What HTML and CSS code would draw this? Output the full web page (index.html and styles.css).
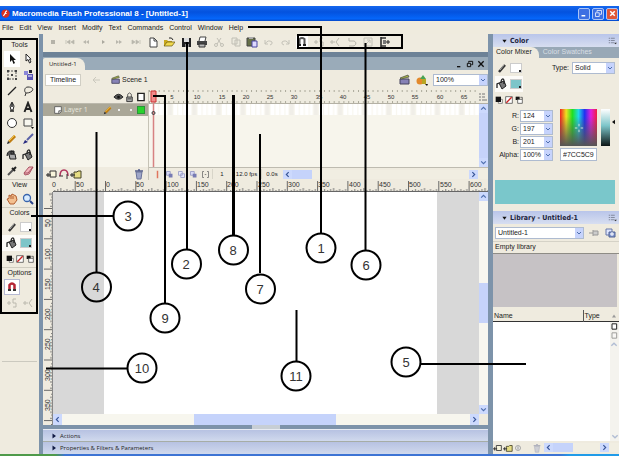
FILE: index.html
```html
<!DOCTYPE html>
<html lang="en">
<head>
<meta charset="utf-8">
<title>Macromedia Flash Professional 8 - [Untitled-1]</title>
<link rel="stylesheet" href="styles.css">
</head>
<body>
<svg class="sprite" aria-hidden="true">
  <symbol id="arrow" viewBox="0 0 12 12"><path d="M4 1v8l2-2 1.500 4 1.500-1-1.500-3H10z" fill="#111"/></symbol>
  <symbol id="subarrow" viewBox="0 0 12 12"><path d="M4 1v7l2-1.500L7.500 10l1.500-1-1.500-2.800H9z" fill="#fff" stroke="#222"/></symbol>
  <symbol id="transform" viewBox="0 0 12 12"><path d="M2 2h8v8H2z" fill="none" stroke="#555" stroke-dasharray="2 1"/><path d="M1 1h2v2H1zM9 1h2v2H9zM1 9h2v2H1zM9 9h2v2H9zM5 5h2v2H5z" fill="#444"/></symbol>
  <symbol id="gradient" viewBox="0 0 12 12"><path d="M5 5h6v6H5z" fill="#5954b8"/><path d="M2 2h4v4H2z" fill="#8a86d8"/><path d="M7 1h3v3H7z" fill="#223"/><path d="M6 7h4" stroke="#fff"/></symbol>
  <symbol id="line" viewBox="0 0 12 12"><path d="M2 10L10 2" stroke="#222" stroke-width="1.200"/></symbol>
  <symbol id="lasso" viewBox="0 0 12 12"><path d="M3 11l1-3C2 7 2 2 6 2s6 2 4 4-5 2-6 2" fill="none" stroke="#333"/></symbol>
  <symbol id="pen" viewBox="0 0 12 12"><path d="M6 1l2 4-1 4H5L4 5z" fill="#fff" stroke="#222"/><path d="M4 10h4M6 2v4" stroke="#222" stroke-width="1.500"/></symbol>
  <symbol id="type" viewBox="0 0 12 12"><path d="M2.500 11L6 2l3.500 9M4 8h4" fill="none" stroke="#222" stroke-width="2"/></symbol>
  <symbol id="oval" viewBox="0 0 12 12"><circle cx="6" cy="6" r="4.500" fill="#fff" stroke="#333"/></symbol>
  <symbol id="rect" viewBox="0 0 12 12"><path d="M2 2h8v7H2z" fill="#f8f7f0" stroke="#444"/><path d="M9 10h3l-1.500 2z" fill="#111"/></symbol>
  <symbol id="pencil" viewBox="0 0 12 12"><path d="M3 9l6-6" stroke="#c07d12" stroke-width="3"/><path d="M3 8l6-6" stroke="#f4c440"/><path d="M1 11l1-3 2 2z" fill="#222"/></symbol>
  <symbol id="brush" viewBox="0 0 12 12"><path d="M5 7l6-6" stroke="#5a62a8" stroke-width="2"/><path d="M1 11l2-4 3 2z" fill="#272a80"/></symbol>
  <symbol id="ink" viewBox="0 0 12 12"><path d="M3 5h6l1 5H4z" fill="#aaa" stroke="#222"/><path d="M1 7c0-6 5-6 7-3M5 2h3v3H5z" fill="#555" stroke="#222"/></symbol>
  <symbol id="bucket" viewBox="0 0 12 12"><path d="M3 5l5-2 2 5-4 3z" fill="#777" stroke="#222"/><path d="M5 5C5 0 8 0 8 3v3M1 10V6l2-1" fill="none" stroke="#222" stroke-width="1.300"/></symbol>
  <symbol id="dropper" viewBox="0 0 12 12"><path d="M2 10l5-5" stroke="#555" stroke-width="2"/><path d="M6 3l3 3M7 5l3-3" stroke="#222" stroke-width="2"/></symbol>
  <symbol id="eraser" viewBox="0 0 12 12"><path d="M2 8l5-6h4L7 9l-4 1z" fill="#f3b6bd" stroke="#a85462"/><path d="M2 8h4l5-6" fill="none" stroke="#a85462"/></symbol>
  <symbol id="hand" viewBox="0 0 12 12"><path d="M4 11L1 6l2-.5V2l2 1 1-2 2 1 2 1 1 4-3 4z" fill="#f3c090" stroke="#b25e2e"/><path d="M5 3v3M7 3v3" stroke="#b25e2e"/></symbol>
  <symbol id="zoomer" viewBox="0 0 12 12"><circle cx="5" cy="5" r="3.500" fill="#d7ebff" stroke="#3864ac" stroke-width="1.300"/><path d="M8 8l3 3" stroke="#2c448c" stroke-width="2"/></symbol>
  <symbol id="stroke" viewBox="0 0 12 12"><path d="M3 10l6-7" stroke="#333" stroke-width="2.500"/><path d="M4 8l4-5" stroke="#aaa"/></symbol>
  <symbol id="bw" viewBox="0 0 12 12"><path d="M5 5h6v6H5z" fill="#fff" stroke="#555"/><path d="M1 1h8v8H1z" fill="#111"/></symbol>
  <symbol id="nocolor" viewBox="0 0 12 12"><path d="M1 1h10v10H1z" fill="#fff" stroke="#333"/><path d="M2 10l8-8" stroke="#c22" stroke-width="2"/></symbol>
  <symbol id="swap" viewBox="0 0 12 12"><path d="M1 1h6v5H1z" fill="#111"/><path d="M4 5h7v6H4z" fill="#fff" stroke="#333"/><path d="M8 2h3v3" fill="none" stroke="#333"/></symbol>
  <symbol id="magnet" viewBox="0 0 12 12"><path d="M3.500 9V4q2.500-3 5 0v5" fill="none" stroke="#b52534" stroke-width="2.500"/><path d="M2 8h3v2H2zM7 8h3v2H7z" fill="#333"/></symbol>
  <symbol id="magnetgray" viewBox="0 0 12 12"><path d="M3.500 10V3q2.500-2 5 0v7" fill="none" stroke="#555" stroke-width="2"/><path d="M2 8h3v2H2zM7 8h3v2H7z" fill="#222"/></symbol>
  <symbol id="smooth" viewBox="0 0 12 12"><path d="M1 6h4M3 4v4M10 2H7v4h3v4H7" fill="none" stroke="#bbb9ae"/></symbol>
  <symbol id="straight" viewBox="0 0 12 12"><path d="M1 6h5M3 4v4M10 2L7 6l3 4" fill="none" stroke="#bbb9ae"/></symbol>
  <symbol id="stop" viewBox="0 0 12 12"><path d="M4 4h4v4H4z" fill="#b5b3a9"/></symbol>
  <symbol id="first" viewBox="0 0 12 12"><path d="M2 4v4M6 4L3 6l3 2zM10 4L7 6l3 2z" fill="#b9b7ad" stroke="#b9b7ad" stroke-width=".7"/></symbol>
  <symbol id="back" viewBox="0 0 12 12"><path d="M6 4L3 6l3 2zM9 4L6 6l3 2z" fill="#b9b7ad"/></symbol>
  <symbol id="play" viewBox="0 0 12 12"><path d="M5 4l3 2-3 2z" fill="#aaa89e"/></symbol>
  <symbol id="fwd" viewBox="0 0 12 12"><path d="M3 4l3 2-3 2zM6 4l3 2-3 2z" fill="#b9b7ad"/></symbol>
  <symbol id="last" viewBox="0 0 12 12"><path d="M2 4l3 2-3 2zM6 4l3 2-3 2zM10 4v4" fill="#b9b7ad" stroke="#b9b7ad" stroke-width=".7"/></symbol>
  <symbol id="new" viewBox="0 0 12 12"><path d="M3 2h4l3 3v6H3z" fill="#fff" stroke="#444"/><path d="M7 2v3h3" fill="none" stroke="#444"/></symbol>
  <symbol id="open" viewBox="0 0 12 12"><path d="M1 10V4h3l1 1h4v5z" fill="#c9a81d"/><path d="M1 10l3-4h8l-3 4z" fill="#f1d94d" stroke="#665615" stroke-width=".7"/><path d="M6 2q3-1 4 2" fill="none" stroke="#222"/></symbol>
  <symbol id="save" viewBox="0 0 12 12"><path d="M2 2h9v9H2z" fill="#222"/><path d="M4 2h5v4H4z" fill="#ddd"/><path d="M5 8h4v3H5z" fill="#888"/></symbol>
  <symbol id="print" viewBox="0 0 12 12"><path d="M3 5l1-4h6L9 5" fill="#fff" stroke="#444"/><path d="M1 5h10v4H1z" fill="#444"/><path d="M3 8h6v3H3z" fill="#bbb" stroke="#333"/></symbol>
  <symbol id="cut" viewBox="0 0 12 12"><path d="M4 2l4 6M8 2L4 8" stroke="#c2c0b6"/><circle cx="3" cy="9" r="1.500" fill="none" stroke="#c2c0b6"/><circle cx="9" cy="9" r="1.500" fill="none" stroke="#c2c0b6"/></symbol>
  <symbol id="copy" viewBox="0 0 12 12"><path d="M2 2h5v6H2zM5 4h5v6H5z" fill="#eceade" stroke="#c0beb4"/></symbol>
  <symbol id="paste" viewBox="0 0 12 12"><path d="M1 2h8v8H1z" fill="#667048" stroke="#444"/><path d="M3 1h4v2H3z" fill="#aaa"/><path d="M6 5h5v6H6z" fill="#ded9ff" stroke="#4b46a0"/></symbol>
  <symbol id="undo" viewBox="0 0 12 12"><path d="M2 4v4h3M2 8q3-5 7-2 1 2-2 3" fill="none" stroke="#c4c2b8"/></symbol>
  <symbol id="redo" viewBox="0 0 12 12"><path d="M10 4v4H7M10 8Q7 3 3 6q-1 2 2 3" fill="none" stroke="#c4c2b8"/></symbol>
  <symbol id="rotate" viewBox="0 0 12 12"><path d="M3 2v3h5c3 1 2 5-1 5H3" fill="none" stroke="#b5b3a9"/></symbol>
  <symbol id="scale" viewBox="0 0 12 12"><path d="M2 2h8v8H2zM4 8l4-4M5 4h3v3" fill="none" stroke="#c4c2b8"/></symbol>
  <symbol id="align" viewBox="0 0 12 12"><path d="M2 1v10" stroke="#222" stroke-width="1.500"/><path d="M2 2h5M2 10h5" stroke="#333" stroke-width="1.500"/><path d="M4 4h3v4H4z" fill="#777"/><path d="M7 6h4M9 4v4" stroke="#222"/></symbol>
  <symbol id="clap" viewBox="0 0 12 12"><path d="M1 5h9v5H1z" fill="#8782b6" stroke="#44425c"/><path d="M1 4l8-3 1 2-8 2z" fill="#a9b746" stroke="#444" stroke-width=".7"/></symbol>
  <symbol id="symbols" viewBox="0 0 12 12"><circle cx="4" cy="7" r="3.500" fill="#e3892b"/><path d="M4 5l3-4 3 4z" fill="#47a352"/><path d="M6 5h4v5H6z" fill="#b8a624"/><path d="M9 10h3l-1 2z" fill="#111"/></symbol>
  <symbol id="eye" viewBox="0 0 12 12"><path d="M1 6q5-6 10 0-5 5-10 0z" fill="#555" stroke="#222"/><circle cx="6" cy="6" r="1.500" fill="#111"/></symbol>
  <symbol id="lock" viewBox="0 0 12 12"><path d="M4 6V3q2-3 4 0v3" fill="none" stroke="#555"/><path d="M3 6h6v5H3z" fill="#aaa" stroke="#333"/><path d="M4 8h4" stroke="#444"/></symbol>
  <symbol id="box" viewBox="0 0 12 12"><path d="M3 2h7v8H3z" fill="#fff" stroke="#222" stroke-width="1.500"/></symbol>
  <symbol id="layer" viewBox="0 0 12 12"><path d="M2 2h8v6L8 10H2z" fill="#fff" stroke="#555"/><path d="M7 10V7h3" fill="#ddd" stroke="#444"/></symbol>
  <symbol id="addlayer" viewBox="0 0 12 12"><path d="M4 3h6v6H4z" fill="#f8f5dc" stroke="#333"/><path d="M0 7h5M2 5v4" stroke="#222"/></symbol>
  <symbol id="guide" viewBox="0 0 12 12"><path d="M2 8q0-6 4-6t4 6" fill="none" stroke="#b0345d" stroke-width="1.500"/><path d="M1 8h4M9 6v5" stroke="#333"/></symbol>
  <symbol id="folder" viewBox="0 0 12 12"><path d="M4 4h3l1-1h3v7H4z" fill="#e6dd84" stroke="#444228"/><path d="M0 7h5M2 5v4" stroke="#222"/></symbol>
  <symbol id="trash" viewBox="0 0 12 12"><path d="M3 4h6l-1 7H4z" fill="#9fa6c8" stroke="#69729a"/><path d="M2 3h8M5 2h2" stroke="#555f8c" stroke-width="1.500"/></symbol>
  <symbol id="onion" viewBox="0 0 12 12"><path d="M2 2h5v5H2z" fill="#d7d8f4" stroke="#8e91bf"/><path d="M5 5h5v5H5z" fill="#777bb3"/></symbol>
  <symbol id="onionout" viewBox="0 0 12 12"><path d="M2 2h5v5H2zM5 5h5v5H5z" fill="#e7e8fa" stroke="#9295c2"/></symbol>
  <symbol id="bracket" viewBox="0 0 12 12"><path d="M4 2H2v8h2M8 2h2v8H8M5 6h2" fill="none" stroke="#666"/></symbol>
  <symbol id="menu" viewBox="0 0 12 12"><path d="M1 3h2M1 6h2M1 9h2M4 3h5M4 6h5M4 9h4" stroke="#6d7486"/><path d="M8 9h4l-2 2z" fill="#333"/></symbol>
  <symbol id="pin" viewBox="0 0 12 12"><path d="M1 6h4M5 3v6M5 4h5v4H5" fill="#ccc" stroke="#999"/></symbol>
  <symbol id="newlib" viewBox="0 0 12 12"><path d="M2 2h6v6H2z" fill="#dfe6ff" stroke="#6777a8"/><path d="M5 5h6v5H5z" fill="#8297d2" stroke="#516293"/><path d="M6 7h4M8 5v4" stroke="#fff"/></symbol>
  <symbol id="props" viewBox="0 0 12 12"><circle cx="6" cy="6" r="3" fill="#eee" stroke="#999"/><path d="M6 4v4" stroke="#888"/></symbol>
  <symbol id="left" viewBox="0 0 12 12"><path d="M8 2L4 6l4 4" fill="none" stroke="#365497" stroke-width="2"/></symbol>
  <symbol id="right" viewBox="0 0 12 12"><path d="M4 2l4 4-4 4" fill="none" stroke="#365497" stroke-width="2"/></symbol>
  <symbol id="up" viewBox="0 0 12 12"><path d="M2 8l4-4 4 4" fill="none" stroke="#4f6fae" stroke-width="2"/></symbol>
  <symbol id="down" viewBox="0 0 12 12"><path d="M2 4l4 4 4-4" fill="none" stroke="#4f6fae" stroke-width="2"/></symbol>
  <symbol id="tri" viewBox="0 0 12 12"><path d="M1 3h10L6 10z" fill="#111"/></symbol>
  <symbol id="triright" viewBox="0 0 12 12"><path d="M3 1v10l7-5z" fill="#111a44"/></symbol>
  <symbol id="flash" viewBox="0 0 12 12"><circle cx="6" cy="6" r="5.500" fill="#d9321f"/><path d="M8 2.500Q6 3 5.500 5.500T3 9M5 6h2.500" fill="none" stroke="#fff" stroke-width="1.500"/></symbol>
</svg>

<div class="app">
  <header class="titlebar">
    <svg><use href="#flash"/></svg>
    <h1>Macromedia Flash Professional 8 - [Untitled-1]</h1>
    <div class="winbuttons">
      <button aria-label="Minimize"><svg viewBox="0 0 12 12"><path d="M2 9h5" stroke="#fff" stroke-width="2"/></svg></button>
      <button aria-label="Restore"><svg viewBox="0 0 12 12"><path d="M4 4V2h6v5H8M2 5h5v5H2z" fill="none" stroke="#fff"/></svg></button>
      <button class="close" aria-label="Close"><svg viewBox="0 0 12 12"><path d="M3 3l6 6M9 3l-6 6" stroke="#fff" stroke-width="2"/></svg></button>
    </div>
  </header>
  <nav class="menubar">
    <a href="#">File</a><a href="#">Edit</a><a href="#">View</a><a href="#">Insert</a><a href="#">Modify</a><a href="#">Text</a><a href="#">Commands</a><a href="#">Control</a><a href="#">Window</a><a href="#">Help</a>
  </nav>

  <div class="work">
    <aside class="tools">
      <h2>Tools</h2>
      <div class="toolgrid">
        <button class="on" aria-label="Selection"><svg><use href="#arrow"/></svg></button><button aria-label="Subselection"><svg><use href="#subarrow"/></svg></button>
        <button aria-label="Free transform"><svg><use href="#transform"/></svg></button><button aria-label="Gradient transform"><svg><use href="#gradient"/></svg></button>
        <button aria-label="Line"><svg><use href="#line"/></svg></button><button aria-label="Lasso"><svg><use href="#lasso"/></svg></button>
        <button aria-label="Pen"><svg><use href="#pen"/></svg></button><button aria-label="Text"><svg><use href="#type"/></svg></button>
        <button aria-label="Oval"><svg><use href="#oval"/></svg></button><button aria-label="Rectangle"><svg><use href="#rect"/></svg></button>
        <button aria-label="Pencil"><svg><use href="#pencil"/></svg></button><button aria-label="Brush"><svg><use href="#brush"/></svg></button>
        <button aria-label="Ink bottle"><svg><use href="#ink"/></svg></button><button aria-label="Paint bucket"><svg><use href="#bucket"/></svg></button>
        <button aria-label="Eyedropper"><svg><use href="#dropper"/></svg></button><button aria-label="Eraser"><svg><use href="#eraser"/></svg></button>
      </div>
      <h2 class="ruled">View</h2>
      <div class="toolgrid">
        <button aria-label="Hand"><svg><use href="#hand"/></svg></button><button aria-label="Zoom"><svg><use href="#zoomer"/></svg></button>
      </div>
      <h2 class="ruled">Colors</h2>
      <div class="swatchrow"><svg><use href="#stroke"/></svg><button class="swatch white" aria-label="Stroke color"></button></div>
      <div class="swatchrow on"><svg><use href="#bucket"/></svg><button class="swatch teal" aria-label="Fill color"></button></div>
      <div class="minirow">
        <button aria-label="Black and white"><svg><use href="#bw"/></svg></button><button aria-label="No color"><svg><use href="#nocolor"/></svg></button><button aria-label="Swap colors"><svg><use href="#swap"/></svg></button>
      </div>
      <h2 class="ruled">Options</h2>
      <div class="toolgrid">
        <button class="on framed" aria-label="Snap"><svg><use href="#magnet"/></svg></button><span></span>
        <button aria-label="Smooth"><svg><use href="#smooth"/></svg></button><button aria-label="Straighten"><svg><use href="#straight"/></svg></button>
      </div>
      <div class="toolsend"></div>
    </aside>

    <main class="doc">
      <div class="maintoolbar">
        <div class="icons">
          <button aria-label="Stop"><svg><use href="#stop"/></svg></button><button aria-label="First"><svg><use href="#first"/></svg></button><button aria-label="Step back"><svg><use href="#back"/></svg></button><button aria-label="Play"><svg><use href="#play"/></svg></button><button aria-label="Step forward"><svg><use href="#fwd"/></svg></button><button aria-label="Last"><svg><use href="#last"/></svg></button>
          <button aria-label="New"><svg><use href="#new"/></svg></button><button aria-label="Open"><svg><use href="#open"/></svg></button><button aria-label="Save"><svg><use href="#save"/></svg></button><button aria-label="Print"><svg><use href="#print"/></svg></button><button aria-label="Cut"><svg><use href="#cut"/></svg></button><button aria-label="Copy"><svg><use href="#copy"/></svg></button><button aria-label="Paste"><svg><use href="#paste"/></svg></button><button aria-label="Undo"><svg><use href="#undo"/></svg></button><button aria-label="Redo"><svg><use href="#redo"/></svg></button>
          <button class="on" aria-label="Snap to objects"><svg><use href="#magnetgray"/></svg></button><button aria-label="Smooth"><svg><use href="#smooth"/></svg></button><button aria-label="Straighten"><svg><use href="#straight"/></svg></button><button aria-label="Rotate"><svg><use href="#rotate"/></svg></button><button aria-label="Scale"><svg><use href="#scale"/></svg></button><button aria-label="Align"><svg><use href="#align"/></svg></button>
        </div>
      </div>
      <div class="tabbar">
        <a class="tab" href="#">Untitled-1</a>
        <div class="docbuttons">
          <button aria-label="Minimize document"><svg viewBox="0 0 12 12"><path d="M3 10h5" stroke="#111" stroke-width="2"/></svg></button>
          <button aria-label="Restore document"><svg viewBox="0 0 12 12"><path d="M4 4V2h6v5H8M2 5h5v5H2z" fill="none" stroke="#111" stroke-width="1.500"/></svg></button>
          <button aria-label="Close document"><svg viewBox="0 0 12 12"><path d="M2 2l8 8M10 2l-8 8" stroke="#111" stroke-width="2"/></svg></button>
        </div>
      </div>
      <div class="editbar">
        <button class="timelinebtn">Timeline</button>
        <svg class="faint" viewBox="0 0 12 12"><path d="M10 6H3M6 3L3 6l3 3" fill="none" stroke="#cac8bd"/></svg>
        <span class="scene"><svg><use href="#clap"/></svg>Scene 1</span>
        <div class="editright">
          <button aria-label="Edit scene"><svg><use href="#clap"/></svg></button>
          <button aria-label="Edit symbols"><svg><use href="#symbols"/></svg></button>
          <span class="combo"><select aria-label="Zoom"><option>100%</option></select><svg><use href="#down"/></svg></span>
        </div>
      </div>

      <section class="timeline">
        <div class="layers">
          <div class="layerhead"><svg><use href="#eye"/></svg><svg><use href="#lock"/></svg><svg><use href="#box"/></svg></div>
          <div class="layer"><svg><use href="#layer"/></svg><span>Layer 1</span><svg><use href="#pencil"/></svg><i class="dot"></i><i class="dot"></i><i class="green"></i></div>
          <div class="layerfoot"><svg><use href="#addlayer"/></svg><svg><use href="#guide"/></svg><svg><use href="#folder"/></svg><svg class="end"><use href="#trash"/></svg></div>
        </div>
        <div class="frames">
          <svg class="framesvg">
            <defs>
              <pattern id="ft" width="4.860" height="77" patternUnits="userSpaceOnUse"><path d="M.5 0v2M.5 11v2" stroke="#aaa899"/></pattern>
              <pattern id="fc" width="24.300" height="26" patternUnits="userSpaceOnUse"><path d="M0 14h4v11H0zM5 14h4v11H5zM10 14h4v11h-4zM15 14h3v11h-3z" fill="#fff"/><path d="M19 14h4v11h-4z" fill="#f0eee8"/></pattern>
            </defs>
            <rect width="100%" height="77" fill="#f7f5ec"/>
            <rect width="100%" height="13" fill="#eeebdf"/>
            <rect width="100%" height="13" fill="url(#ft)"/>
            <rect y="13" width="100%" height="1" fill="#b4b1a5"/>
            <rect y="14" width="100%" height="12" fill="url(#fc)"/>
            <path d="M2 1h5v11H2z" fill="#f08a8a" stroke="#c33"/>
            <path d="M4.500 12v65" stroke="#d78282" stroke-width="1.500"/>
            <circle cx="4.500" cy="23" r="1.500" fill="none" stroke="#333"/>
            <g class="nums"><text x="23" y="9">5</text><text x="48" y="9">10</text><text x="73" y="9">15</text><text x="97" y="9">20</text><text x="121" y="9">25</text><text x="145" y="9">30</text><text x="170" y="9">35</text><text x="194" y="9">40</text><text x="218" y="9">45</text><text x="242" y="9">50</text><text x="266" y="9">55</text><text x="291" y="9">60</text><text x="315" y="9">65</text></g>
            <path d="M328 0h11v13h-11z" fill="#eeebdf"/><path d="M330 4h2M330 7h2M330 10h2M333 4h3M333 7h3M333 10h5" stroke="#777"/>
          </svg>
          <div class="vscroll short"><svg><use href="#up"/></svg><i></i><svg><use href="#down"/></svg></div>
          <div class="framefoot">
            <svg viewBox="0 0 12 12"><path d="M6 1v10" stroke="#e0765e" stroke-width="2"/></svg><svg><use href="#onion"/></svg><svg><use href="#onionout"/></svg><svg><use href="#onion"/></svg><svg><use href="#bracket"/></svg>
            <span class="num">1</span><span class="fps">12.0 fps</span><span class="sec">0.0s</span>
            <div class="hscroll"><svg><use href="#left"/></svg><i></i><svg class="end"><use href="#right"/></svg></div>
          </div>
        </div>
      </section>

      <div class="hruler">
        <svg>
          <defs><pattern id="ht" x="62" width="30.300" height="12" patternUnits="userSpaceOnUse"><path d="M.5 1v11" stroke="#666"/><path d="M4.500 10v2M7.500 9v3M10.500 10v2M13.500 9v3M16.500 8v4M19.500 10v2M22.500 9v3M25.500 10v2M28.500 9v3" stroke="#777"/></pattern></defs>
          <rect x="10" width="100%" height="12" fill="url(#ht)"/><rect x="10" y="11" width="100%" height="1" fill="#666"/>
          <g class="rnum"><text x="9" y="7">0</text><text x="33" y="7">50</text><text x="63" y="7">0</text><text x="93" y="7">50</text><text x="124" y="7">100</text><text x="154" y="7">150</text><text x="184" y="7">200</text><text x="215" y="7">250</text><text x="245" y="7">300</text><text x="275" y="7">350</text><text x="306" y="7">400</text><text x="336" y="7">450</text><text x="366" y="7">500</text><text x="397" y="7">550</text><text x="427" y="7">600</text></g>
        </svg>
      </div>
      <div class="stagearea">
        <div class="vruler">
          <svg>
            <defs><pattern id="vt" y="16" width="10" height="30.300" patternUnits="userSpaceOnUse"><path d="M1 .5h9" stroke="#666"/><path d="M8 4.500h2M7 7.500h3M8 10.500h2M7 13.500h3M6 16.500h4M8 19.500h2M7 22.500h3M8 25.500h2M7 28.500h3" stroke="#777"/></pattern></defs>
            <path d="M0 0h10v233H0z" fill="url(#vt)"/><path d="M9.500 0v233" stroke="#888"/>
            <g class="rnum"><text transform="translate(7 35) rotate(-90)">50</text><text transform="translate(7 68) rotate(-90)">100</text><text transform="translate(7 98) rotate(-90)">150</text><text transform="translate(7 128) rotate(-90)">200</text><text transform="translate(7 158) rotate(-90)">250</text><text transform="translate(7 189) rotate(-90)">300</text><text transform="translate(7 219) rotate(-90)">350</text></g>
          </svg>
        </div>
        <div class="canvas"><div class="stage"></div></div>
        <div class="vscroll tall"><svg><use href="#up"/></svg><i></i><svg><use href="#down"/></svg></div>
        <div class="hscroll big"><svg><use href="#left"/></svg><i></i><svg class="end"><use href="#right"/></svg></div>
      </div>
      <div class="splitter"><i></i></div>
      <button class="docked"><svg><use href="#triright"/></svg>Actions</button>
      <button class="docked"><svg><use href="#triright"/></svg>Properties &amp; Filters &amp; Parameters</button>
    </main>

    <aside class="panels">
      <h2 class="panelhead"><svg class="tiny"><use href="#tri"/></svg>Color<svg class="end"><use href="#menu"/></svg></h2>
      <div class="ptabs"><a class="active" href="#">Color Mixer</a><a href="#">Color Swatches</a></div>
      <div class="mixer">
        <div class="mixtop">
          <div class="mixsw">
            <div class="swatchrow"><svg><use href="#stroke"/></svg><button class="swatch white" aria-label="Mixer stroke"></button></div>
            <div class="swatchrow on"><svg><use href="#bucket"/></svg><button class="swatch teal" aria-label="Mixer fill"></button></div>
            <div class="minirow"><button aria-label="Default"><svg><use href="#bw"/></svg></button><button aria-label="None"><svg><use href="#nocolor"/></svg></button><button aria-label="Swap"><svg><use href="#swap"/></svg></button></div>
          </div>
          <div class="typefield"><label for="ftype">Type:</label><span class="combo"><select id="ftype"><option>Solid</option></select><svg><use href="#down"/></svg></span></div>
        </div>
        <div class="mixvals">
          <div class="rgb">
            <label for="r">R:</label><span class="combo"><input id="r" value="124"><svg><use href="#down"/></svg></span>
            <label for="g">G:</label><span class="combo"><input id="g" value="197"><svg><use href="#down"/></svg></span>
            <label for="b">B:</label><span class="combo"><input id="b" value="201"><svg><use href="#down"/></svg></span>
            <label for="a">Alpha:</label><span class="combo"><input id="a" value="100%"><svg><use href="#down"/></svg></span>
          </div>
          <div class="picker">
            <div class="spectrum"><svg viewBox="0 0 12 12"><path d="M6 1v3M6 8v3M1 6h3M8 6h3" stroke="#e8f4e8"/></svg></div>
            <input class="hex" aria-label="Hex color" value="#7CC5C9">
          </div>
          <div class="lum"></div>
          <svg class="knob" viewBox="0 0 4 6"><path d="M4 0v6L0 3z" fill="#111"/></svg>
        </div>
        <div class="preview"></div>
      </div>
      <h2 class="panelhead"><svg class="tiny"><use href="#tri"/></svg>Library - Untitled-1<svg class="end"><use href="#menu"/></svg></h2>
      <div class="libbar"><span class="combo"><select aria-label="Library document"><option>Untitled-1</option></select><svg><use href="#down"/></svg></span><svg><use href="#pin"/></svg><svg><use href="#newlib"/></svg></div>
      <p class="libinfo">Empty library</p>
      <div class="libpreview"></div>
      <table class="libtable"><thead><tr><th>Name</th><th class="typecol">Type</th><th class="sortcol"><svg viewBox="0 0 12 12"><path d="M2 9l4-6 4 6z" fill="#999"/></svg></th></tr></thead></table>
      <div class="liblist"><div class="libside"><svg><use href="#box"/></svg><svg class="pale"><use href="#box"/></svg><svg class="pale"><use href="#up"/></svg><svg class="pale end"><use href="#down"/></svg></div></div>
      <div class="libfoot"><svg><use href="#addlayer"/></svg><svg><use href="#folder"/></svg><svg><use href="#props"/></svg><svg class="pale gap"><use href="#trash"/></svg><div class="hscroll"><svg><use href="#left"/></svg><i></i><svg class="end"><use href="#right"/></svg></div></div>
    </aside>
  </div>
  <footer class="taskbar"></footer>
</div>

<svg class="callouts" viewBox="0 0 622 456">
  <g fill="none" stroke="#000" stroke-width="2">
    <path d="M1 39h36v274H1z"/><path d="M298 35h104v13H298z"/>
    <path d="M248 27h73v206M365.500 43v208M187 42v207M260 134v139M153 96h12v207M96.500 132v140M31 216h82M46 368.500h81M296.500 310v51M421 364h105"/>
    <path d="M233.500 95v140" stroke-width="3"/>
    <circle cx="321" cy="248" r="14.500"/><circle cx="366" cy="265" r="14.500"/><circle cx="186.500" cy="264" r="14.500"/><circle cx="233.500" cy="250" r="14.500"/><circle cx="260.500" cy="289" r="14.500"/><circle cx="165" cy="318" r="14.500"/><circle cx="96.500" cy="287" r="14.500"/><circle cx="128" cy="216" r="14.500"/><circle cx="142" cy="368" r="14.500"/><circle cx="296" cy="376" r="14.500"/><circle cx="406" cy="362" r="14.500"/>
  </g>
  <g class="cnum"><text x="321" y="253">1</text><text x="366" y="270">6</text><text x="186" y="269">2</text><text x="233" y="255">8</text><text x="260" y="294">7</text><text x="165" y="323">9</text><text x="96" y="292">4</text><text x="128" y="221">3</text><text x="142" y="373">10</text><text x="296" y="381">11</text><text x="406" y="367">5</text></g>
</svg>
</body>
</html>
```
FILE: styles.css
```css
* { box-sizing: border-box; }
body {
  margin: 0;
  background: #fff;
  color: #222;
  font: 7px/10px "Liberation Sans", sans-serif;
}
svg { display: block; width: 12px; height: 12px; flex: none; }
button { margin: 0; padding: 0; border: 0; background: none; font: inherit; color: inherit; display: flex; align-items: center; justify-content: center; }
a { color: inherit; text-decoration: none; }
h1, h2, p { margin: 0; font: inherit; }
.sprite { position: absolute; width: 0; height: 0; }
.end { margin-left: auto; }
.pale { opacity: 0.4; }

.app { display: flex; flex-direction: column; min-height: 100vh; padding: 6px 3px 0 0; }

.titlebar { display: flex; align-items: center; gap: 2px; height: 15px; padding: 0 1px; background: linear-gradient(#1667ee, #0452de 40%, #0566fa 85%, #0548c8); color: #fff; }
.titlebar svg { width: 9px; height: 9px; }
.titlebar h1 { font: bold 8px/12px "Liberation Sans", sans-serif; white-space: nowrap; }
.winbuttons { display: flex; gap: 2px; margin-left: auto; }
.winbuttons button { width: 12px; height: 12px; border: 1px solid #a9c4f6; border-radius: 2px; background: #3d6fe2; }
.winbuttons .close { background: #df5737; }

.menubar { display: flex; gap: 6px; height: 13px; padding: 0 2px; align-items: center; background: #efebde; }

.work { flex: 1; display: flex; background: #f0ece0; }

.tools { flex: none; width: 39px; padding: 6px 2px 0; background: #efebdf; }
.tools h2 { height: 11px; line-height: 10px; text-align: center; }
.tools .ruled { border-top: 1px solid #cfccc0; height: 12px; }
.toolgrid { display: grid; grid-template-columns: 16px 16px; grid-auto-rows: 16px; justify-content: center; }
.on { background: #fff; }
.framed { border: 1px solid #b6b9d2; }
.swatchrow { display: flex; align-items: center; gap: 2px; height: 16px; padding: 0 4px; }
.swatchrow.on { background: #fcfbf8; }
.swatch { width: 12px; height: 10px; border: 1px solid #ccc; }
.swatch::after { content: ""; align-self: flex-end; margin-left: auto; width: 2px; height: 2px; background: #222; }
.white { background: #fff; }
.teal { background: #7cc5c9; }
.minirow { display: flex; gap: 2px; height: 16px; align-items: center; padding: 0 4px; }
.minirow svg { width: 8px; height: 10px; }
.toolsend { height: 51px; border-bottom: 1px solid #cbc9bf; }

.doc { flex: 1; min-width: 0; display: flex; flex-direction: column; border: solid #7d93aa; border-width: 0 5px 0 4px; }
.maintoolbar { height: 18px; background: #efebdf; padding: 2px 4px; }
.icons { display: flex; justify-content: space-between; max-width: 344px; }
.tabbar { display: flex; align-items: flex-end; height: 18px; border-top: 5px solid #6d8297; background: #9aabb9; }
.tab { height: 12px; padding: 0 8px 0 6px; background: #efebdf; border-radius: 2px 8px 0 0; font: 6px/12px "Open Sans", sans-serif; }
.docbuttons { display: flex; align-items: center; gap: 3px; height: 13px; margin-left: auto; padding-right: 3px; }
.docbuttons svg { width: 8px; height: 8px; }
.editbar { display: flex; align-items: center; gap: 9px; height: 20px; padding: 0 0 0 2px; background: #efebdf; }
.timelinebtn { width: 36px; height: 12px; background: #fff; border: 1px solid #d0cec4; }
.scene { display: flex; align-items: center; gap: 1px; }
.scene svg { width: 10px; height: 10px; }
.editright { display: flex; align-items: center; gap: 5px; margin-left: auto; }
.combo { display: flex; align-items: center; height: 12px; background: #fff; border: 1px solid #aebbd0; }
.combo select, .combo input { appearance: none; flex: 1; min-width: 0; width: 0; height: 10px; margin: 0; padding: 0 2px; border: 0; border-radius: 0; background: none; color: #222; font: inherit; }
.combo svg { width: 8px; height: 10px; padding: 1px; background: #c6d3fc; }
.editright .combo { width: 55px; }

.timeline { display: flex; height: 90px; background: #f7f5ec; }
.layers { display: flex; flex-direction: column; flex: none; width: 106px; border-right: 1px solid #c6c3b6; }
.layerhead { display: flex; justify-content: flex-end; height: 14px; padding: 1px 2px; background: #efebdf; border-bottom: 1px solid #bbb8ac; }
.layerhead svg { width: 11px; }
.layer { display: flex; align-items: center; height: 12px; padding: 0 3px 0 10px; background: #aaa798; color: #e9e7de; }
.layer span { flex: 1; font: 7px/10px "Open Sans", sans-serif; padding-left: 1px; }
.layer svg { width: 10px; height: 10px; }
.dot { width: 2px; height: 2px; margin: 0 5px; background: #eee; }
.green { width: 8px; height: 8px; background: #28d22c; border: 1px solid #289738; }
.layerfoot { display: flex; align-items: center; height: 13px; margin-top: auto; padding: 0 3px; background: #efebdf; }
.frames { flex: 1; min-width: 0; display: grid; grid-template-columns: 1fr 9px; grid-template-rows: 77px 13px; }
.framesvg { width: 100%; height: 77px; grid-column: 1 / 3; grid-row: 1; }
.nums { font: 6px "Liberation Sans", sans-serif; text-anchor: middle; fill: #333; }
.vscroll { display: flex; flex-direction: column; background: #f7f6f0; }
.vscroll svg { width: 9px; height: 9px; padding: 1px; background: #ccd9fd; }
.vscroll i { flex: 1; background: #c6d3fa; }
.short { grid-column: 2; grid-row: 1; margin-top: 14px; z-index: 1; }
.framefoot { grid-column: 1 / 3; display: flex; align-items: center; gap: 1px; height: 13px; padding-left: 3px; background: #efebdf; border-top: 1px solid #bebbb0; }
.framefoot > svg { width: 11px; height: 9px; }
.framefoot span { border-left: 1px solid #d8d5c9; font-size: 6px; }
.num { width: 19px; text-align: center; }
.fps { width: 28px; text-align: center; }
.sec { width: 21px; text-align: center; }
.hscroll { flex: 1; display: flex; height: 9px; background: #f7f6ee; }
.hscroll svg { width: 9px; height: 9px; padding: 1px; background: #ccd9fd; }
.hscroll i { width: 20px; background: #c5d3fb; }
.framefoot .hscroll { padding-right: 10px; background: #f1eee2; }

.hruler { height: 12px; background: #efebdf; }
.hruler svg { width: 100%; height: 12px; }
.rnum { font: 7px "Liberation Sans", sans-serif; fill: #333; }
.stagearea { flex: 1; display: grid; grid-template-columns: 10px 1fr 9px; grid-template-rows: 1fr 11px; min-height: 120px; background: #efebdf; }
.vruler { grid-row: 1 / 3; min-height: 0; background: #efebdf; overflow: hidden; }
.vruler svg { width: 10px; height: 233px; }
.canvas { display: flex; padding: 0 42px 0 51px; background: #d8d8d8; }
.stage { flex: 1; background: #fff; }
.tall i { flex: 0 0 40px; margin: 82px 0 auto; }
.big { grid-column: 2; height: 11px; }
.big svg { height: 11px; }
.big i { width: 142px; margin-left: 132px; }
.splitter { display: flex; justify-content: center; height: 4px; background: #7d93aa; }
.splitter i { width: 28px; background: #c7ced5; }
.docked { flex: none; justify-content: flex-start; gap: 3px; height: 12px; padding-left: 8px; background: linear-gradient(#b7c2e2, #d0d9ed); border-top: 1px solid #e7ebf3; font: 6px/10px "Open Sans", sans-serif; }
.docked + .docked { height: 13px; border-top-color: #a6ada6; }
.docked svg { width: 6px; height: 6px; }

.panels { flex: none; width: 126px; display: flex; flex-direction: column; background: #efebdf; }
.panelhead { display: flex; align-items: center; gap: 3px; height: 13px; padding: 0 2px 0 9px; background: linear-gradient(#b9c5ea, #d7def0); font: bold 7px/10px "DejaVu Sans Condensed", sans-serif; color: #1c2440; }
.panelhead svg { width: 9px; height: 9px; }
.panelhead .tiny { width: 5px; height: 6px; }
.ptabs { display: flex; height: 11px; background: #98a8b6; color: #d8dfe5; }
.ptabs a { padding: 0 4px; }
.ptabs .active { padding: 0 7px 0 3px; background: #efebdf; border-radius: 0 8px 0 0; color: #222; }
.mixer { padding: 2px 4px 7px 2px; }
.mixtop { display: flex; justify-content: space-between; }
.mixsw { width: 28px; }
.mixsw .swatchrow { padding: 0 1px; }
.mixsw .minirow { padding: 0; }
.typefield { display: flex; align-items: center; gap: 3px; height: 16px; }
.typefield .combo { width: 43px; }
.mixvals { display: flex; align-items: flex-start; padding: 1px 0; }
.rgb { display: grid; grid-template-columns: 24px 33px; grid-auto-rows: 13px; column-gap: 1px; align-items: center; text-align: right; }
.picker { width: 37px; margin-left: 7px; }
.spectrum { height: 37px; display: flex; align-items: center; justify-content: center; background: linear-gradient(to bottom, transparent 20%, #555), linear-gradient(to right, #f02020, #f0e020, #20e020, #20d8e8, #2030f0, #e020e0, #f02040); }
.spectrum svg { width: 10px; height: 10px; }
.hex { display: block; width: 37px; height: 13px; margin: 2px 0 0; padding: 0 2px; border: 1px solid #aebbd0; border-radius: 0; background: #fff; color: #222; font: inherit; }
.lum { width: 11px; height: 37px; margin-left: 4px; background: linear-gradient(#fff, #7cc5c9 45%, #0b1414); }
.knob { width: 3px; height: 6px; margin: 10px 0 0 2px; }
.preview { height: 24px; margin-top: 18px; background: #7ac7cb; }
.libbar { display: flex; align-items: center; gap: 4px; height: 17px; padding: 0 3px 0 2px; }
.libbar .combo { flex: 1; }
.libinfo { height: 13px; padding: 0 2px; border-top: 1px solid #d5d2c7; border-bottom: 1px solid #8e8c86; }
.libpreview { height: 53px; margin-right: 2px; background: #c6c2c5; }
.libtable { width: 100%; height: 12px; margin-top: 3px; border-collapse: collapse; border-bottom: 1px solid #333; }
.libtable th { padding: 0 1px; font-weight: normal; text-align: left; }
.libtable .typecol { width: 27px; border-left: 1px solid #555; }
.libtable .sortcol { width: 9px; }
.sortcol svg { width: 6px; height: 6px; }
.liblist { flex: 1; display: flex; justify-content: flex-end; background: #fff; }
.libside { display: flex; flex-direction: column; width: 9px; background: #f4f3ee; }
.libside svg { width: 8px; height: 9px; }
.libside .end { margin-top: auto; }
.libfoot { display: flex; align-items: center; height: 13px; }
.libfoot > svg { width: 10px; height: 10px; }
.libfoot .gap { margin-left: 9px; }
.libfoot .hscroll { padding-right: 10px; margin-left: 2px; background: #f1eee2; }

.taskbar { height: 3px; background: linear-gradient(to right, #4f9a4a 55px, #3d74d4 65px 560px, #209be8 570px); }

.callouts { position: absolute; top: 0; left: 0; width: 622px; height: 456px; pointer-events: none; }
.cnum { font: 13px "Liberation Sans", sans-serif; text-anchor: middle; fill: #333; }
```
